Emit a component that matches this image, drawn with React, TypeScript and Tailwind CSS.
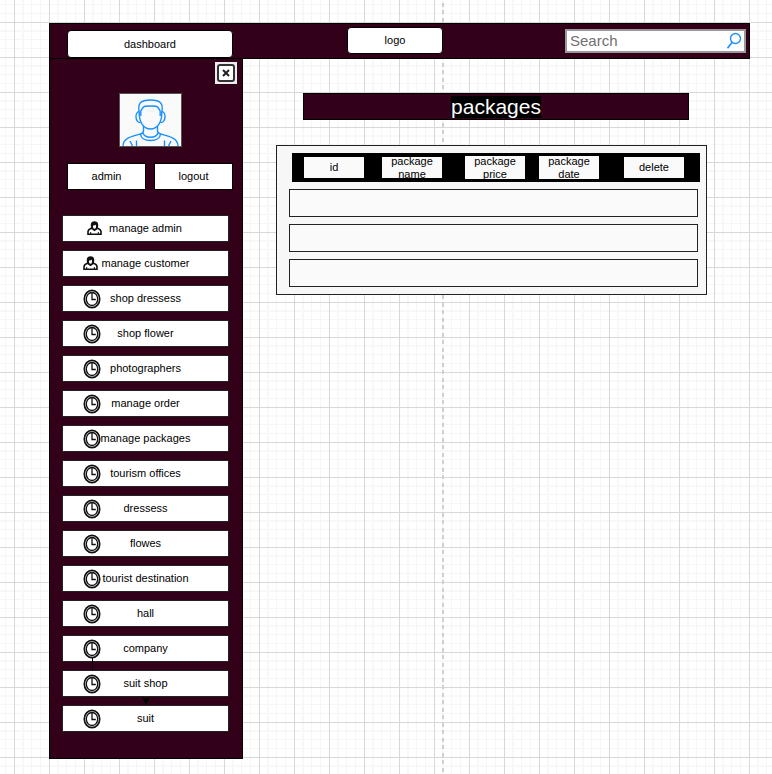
import React from "react";

const menu: { label: string; icon: "admin" | "customer" | "clock"; link?: boolean; target?: boolean }[] = [
  { label: "manage admin", icon: "admin" },
  { label: "manage customer", icon: "customer" },
  { label: "shop dressess", icon: "clock" },
  { label: "shop flower", icon: "clock" },
  { label: "photographers", icon: "clock" },
  { label: "manage order", icon: "clock" },
  { label: "manage packages", icon: "clock" },
  { label: "tourism offices", icon: "clock" },
  { label: "dressess", icon: "clock" },
  { label: "flowes", icon: "clock" },
  { label: "tourist destination", icon: "clock" },
  { label: "hall", icon: "clock" },
  { label: "company", icon: "clock", link: true },
  { label: "suit shop", icon: "clock" },
  { label: "suit", icon: "clock", target: true },
];

const columns = [
  { label: "id", box: "ml-3 h-[21px]" },
  { label: "package name", box: "ml-[18px] h-[21px]" },
  { label: "package price", box: "ml-[23px] h-[23px]" },
  { label: "package date", box: "ml-[14px] h-[23px]" },
  { label: "delete", box: "ml-[25px] h-[21px]" },
];

function ClockIcon() {
  return (
    <svg viewBox="0 0 18 20" className="h-5 w-[18px]" fill="none" aria-hidden="true">
      <ellipse cx="9" cy="10" rx="7.7" ry="8.6" stroke="#111" strokeWidth="1.7" />
      <ellipse cx="9" cy="10" rx="5.7" ry="6.5" stroke="#111" strokeWidth="1.3" />
      <path d="M9 4V10.5H12.8" stroke="#111" strokeWidth="1.3" />
    </svg>
  );
}

function UserIcon() {
  return (
    <svg viewBox="0 0 15 14" className="h-[14px] w-[15px]" aria-hidden="true">
      <path
        d="M1 13.2V10.6C1.2 8.8 2.6 7.8 4.6 7.2L7.5 9.3L10.4 7.2C12.4 7.8 13.8 8.8 14 10.6V13.2Z"
        fill="#fff"
        stroke="#111"
        strokeWidth="1.6"
      />
      <path d="M3.7 11V13M11.3 11V13" stroke="#111" />
      <path
        d="M3.6 7.4C4.4 6.2 3.6 5 3.8 3.5C4 1.2 5.4.2 7.5.2S11 1.2 11.2 3.5C11.4 5 10.6 6.2 11.4 7.4L9 8.4H6Z"
        fill="#111"
      />
      <path d="M6 4.4C7 4.6 8.2 4.2 9 3.8V5.4C9 6.7 8.5 7.7 7.5 7.7S6 6.7 6 5.4Z" fill="#fff" />
    </svg>
  );
}

function Avatar() {
  return (
    <svg
      viewBox="0 0 61 52"
      className="h-full w-full"
      fill="none"
      stroke="#1a90ff"
      strokeWidth="1.4"
      role="img"
      aria-label="Profile picture"
    >
      <path d="M19.2 18C17.5 10 20 6 30.5 6S43.5 10 41.8 18" />
      <path d="M20.8 22V17C22.5 15 22 12.8 25 12.2Q30.5 11.7 36 12.2C39 12.8 38.5 15 40.2 17V22" />
      <path d="M19.2 18C19 29 24 35 30.5 35S42 29 41.8 18" />
      <path d="M19.2 17.5C14.5 18 15 29 20.5 28.5M41.8 17.5C46.5 18 46 29 40.5 28.5" />
      <path d="M23.5 32V37Q23.5 39 20.5 40C21 44.5 25 46.5 30.5 46.5S40 44.5 40.5 40Q37.5 39 37.5 37V32" />
      <path d="M23 39C24 42.2 27 43.3 30.5 43.3S37 42.2 38 39" />
      <path d="M20.5 40C12 42 3 44 3 52M40.5 40C49 42 58 44 58 52" />
      <path d="M10 47L12.5 52M16.5 46.5V52M51 47L48.5 52M44.5 46.5V52" />
    </svg>
  );
}

export default function App() {
  return (
    <div className="min-h-screen bg-white bg-[image:linear-gradient(#d0d0d0_4px,transparent_4px,transparent_7px,#d0d0d0_7px,#d0d0d0_11px,transparent_11px),linear-gradient(90deg,#d8d8d8_1px,transparent_1px),linear-gradient(#d8d8d8_1px,transparent_1px),linear-gradient(90deg,transparent_8px,#f8f8f8_8px,#f8f8f8_10px,transparent_10px,transparent_17px,#f6f6f6_17px,#f6f6f6_18px,transparent_18px,transparent_26px,#f6f6f6_26px,#f6f6f6_27px,transparent_27px),linear-gradient(transparent_8px,#f8f8f8_8px,#f8f8f8_10px,transparent_10px,transparent_17px,#f6f6f6_17px,#f6f6f6_18px,transparent_18px,transparent_26px,#f6f6f6_26px,#f6f6f6_27px,transparent_27px)] bg-[size:2px_15px,35px_35px,35px_35px,35px_35px,35px_35px] bg-[position:442px_3px,14px_22px,14px_22px,14px_22px,14px_22px] [background-repeat:repeat-y,repeat,repeat,repeat,repeat] pt-[23px] pr-[22px] pb-[15px] pl-[49px] font-['Liberation_Sans',Arial,sans-serif] text-[11px] leading-[13px] text-black">
      <header className="flex h-9 items-start border border-black bg-[#330019] pr-[3px] pl-[17px]">
        <button className="mt-[6px] h-7 w-[166px] rounded-[4px] border border-black bg-white">dashboard</button>
        <button className="mt-[3px] ml-[114px] h-[27px] w-24 rounded-[4px] border border-black bg-white">logo</button>
        <label className="mt-[5px] ml-auto flex h-6 w-[181px] items-center border-2 border-[#999] bg-white pr-[2px] pl-[3px]">
          <input
            type="search"
            aria-label="Search"
            placeholder="Search"
            className="min-w-0 flex-1 bg-transparent text-[15px] leading-5 outline-none placeholder:text-[#707070]"
          />
          <svg viewBox="0 0 16 18" className="h-[18px] w-4" fill="none" stroke="#1e90ff" strokeWidth="1.4" aria-hidden="true">
            <ellipse cx="9.5" cy="6.5" rx="5" ry="5" />
            <path d="M6.2 10.3L1.5 16.2" strokeWidth="1.7" />
          </svg>
        </label>
      </header>

      <div className="-mt-px flex items-start">
        <aside className="flex w-[194px] shrink-0 flex-col border border-black bg-[#330019] pb-[26px]">
          <button aria-label="Close" className="mt-[3px] mr-[5px] h-[22px] w-[22px] self-end bg-[#ededed]">
            <svg viewBox="0 0 22 22" className="h-full w-full" fill="none" stroke="#333" aria-hidden="true">
              <rect x="3" y="3" width="16" height="16" rx="2" fill="#fff" strokeWidth="2" />
              <path d="M8 8L14 14M14 8L8 14" stroke="#222" strokeWidth="2" />
            </svg>
          </button>
          <div className="mt-[9px] ml-[69px] h-[54px] w-[63px] border border-[#555] bg-[#fafafa]">
            <Avatar />
          </div>
          <div className="mt-4 ml-[17px] flex gap-2">
            <button className="h-[27px] w-[79px] border border-black bg-white">admin</button>
            <button className="h-[27px] w-[79px] border border-black bg-white">logout</button>
          </div>
          <nav className="mt-[25px] ml-3 flex w-[167px] flex-col gap-2">
            {menu.map((item) => (
              <button key={item.label} className="relative h-[27px] border border-[#222] bg-white">
                <span
                  className={
                    item.icon === "clock"
                      ? "absolute top-[3px] left-5"
                      : item.icon === "admin"
                        ? "absolute top-[5px] left-6"
                        : "absolute top-[5px] left-5"
                  }
                >
                  {item.icon === "clock" ? <ClockIcon /> : <UserIcon />}
                </span>
                {item.link && <span className="absolute top-[22px] left-[29px] h-[14px] w-px bg-black" />}
                {item.target && (
                  <svg viewBox="0 0 8 8" className="absolute -top-[9px] left-[79px] h-2 w-2" aria-hidden="true">
                    <path d="M0 0L4 1.5L8 0L4 8Z" />
                  </svg>
                )}
                {item.label}
              </button>
            ))}
          </nav>
        </aside>

        <main className="min-w-0 flex-1 pt-[35px] pl-[33px]">
          <h1 className="mr-[61px] ml-[27px] flex h-[27px] items-center justify-center border border-black bg-[#330019] text-[21px] leading-[22px] text-white">
            <span className="bg-black">packages</span>
          </h1>
          <table className="mt-[25px] mr-[43px] block border border-[#222] bg-[#f7f7f7] pt-[7px] pr-[6px] pb-[7px] pl-3">
            <thead className="block">
              <tr className="ml-[3px] flex h-[29px] items-center bg-black">
                {columns.map((col) => (
                  <th
                    key={col.label}
                    scope="col"
                    className={"flex w-[60px] items-center justify-center bg-[#fafafa] px-2 text-center font-normal " + col.box}
                  >
                    {col.label}
                  </th>
                ))}
              </tr>
            </thead>
            <tbody className="mt-[7px] mr-[2px] flex flex-col gap-[7px]">
              {[1, 2, 3].map((row) => (
                <tr key={row} className="block h-7 border border-[#222] bg-[#fafafa]">
                  <td colSpan={5} />
                </tr>
              ))}
            </tbody>
          </table>
        </main>
      </div>
    </div>
  );
}
